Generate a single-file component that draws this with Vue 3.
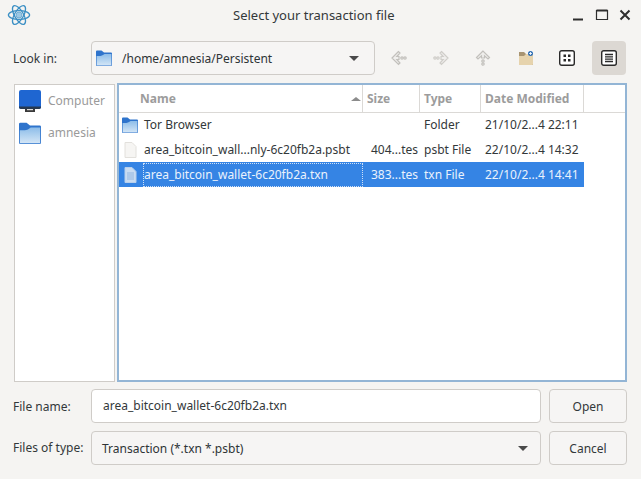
<template>
  <main class="dialog">
    <header class="titlebar">
      <svg class="logo" width="24" height="24" viewBox="0 0 24 24" fill="none" stroke="#3b8fc4" stroke-width="1.3">
        <ellipse cx="12" cy="12" rx="10.6" ry="4.4" />
        <ellipse cx="12" cy="12" rx="10.6" ry="4.4" transform="rotate(60 12 12)" />
        <ellipse cx="12" cy="12" rx="10.6" ry="4.4" transform="rotate(120 12 12)" />
        <circle cx="12" cy="12" r="3" fill="#9cc8e4" stroke="#5fa5d0" stroke-width="0.8" />
      </svg>
      <h1 class="title">Select your transaction file</h1>
      <div class="wincontrols">
        <svg width="14" height="14" viewBox="0 0 14 14"><path d="M1 11.5h10" stroke="#2e2e2e" stroke-width="2" /></svg>
        <svg width="14" height="14" viewBox="0 0 14 14" fill="none"><path d="M1.500 2.500h11v9h-11z" stroke="#2e2e2e" stroke-width="1.200" /><path d="M1.500 2.500h11" stroke="#2e2e2e" stroke-width="2" /></svg>
        <svg width="14" height="14" viewBox="0 0 14 14"><path d="M2.500 2.500l9 9M11.500 2.500l-9 9" stroke="#2e2e2e" stroke-width="2" /></svg>
      </div>
    </header>

    <section class="toolbar">
      <label class="label">Look in:</label>
      <div class="combo path">
        <svg class="ico" width="16" height="16" viewBox="0 0 16 16">
          <defs><linearGradient id="fold" x1="0" y1="0" x2="0" y2="1"><stop offset="0" stop-color="#8dbde9" /><stop offset="1" stop-color="#d4e6f6" /></linearGradient></defs>
          <path d="M0 1.500a1 1 0 0 1 1-1h4.500L8 2.500h7a1 1 0 0 1 1 1V15a1 1 0 0 1-1 1H1a1 1 0 0 1-1-1z" fill="#2f74cc" />
          <path d="M.6 6c2.500 0 5.400 0 6.400-1l1.500-1h6.900v11a.5.500 0 0 1-.5.500H1.100a.5.500 0 0 1-.5-.5z" fill="url(#fold)" />
        </svg>
        <span>/home/amnesia/Persistent</span>
        <i class="caret"></i>
      </div>
      <div class="tools">
        <button class="tool">
          <svg width="18" height="18" viewBox="0 0 18 18" fill="#f0efed" stroke="#c2c0bc" stroke-width="1.200"><path d="M8.500 2.500L2 9l6.500 6.500 1.500-1.500L6.800 10.500h2.200V7.500H6.800L10 4z" /><circle cx="12" cy="9" r="1.200" /><circle cx="15" cy="9" r="1.200" /></svg>
        </button>
        <button class="tool">
          <svg width="18" height="18" viewBox="0 0 18 18" fill="#f0efed" stroke="#cfcdc9" stroke-width="1.200"><path d="M9.500 2.500L16 9l-6.500 6.500L8 14l3.200-3.500H9V7.500h2.200L8 4z" /><circle cx="6" cy="9" r="1.200" /><circle cx="3" cy="9" r="1.200" /></svg>
        </button>
        <button class="tool">
          <svg width="18" height="18" viewBox="0 0 18 18" fill="#f0efed" stroke="#c2c0bc" stroke-width="1.200"><path d="M9 2L2.500 8.500 4 10l3.500-3.200V9h3V6.800L14 10l1.500-1.500z" /><circle cx="9" cy="12" r="1.200" /><circle cx="9" cy="15" r="1.200" /></svg>
        </button>
        <button class="tool">
          <svg class="newdir" width="16" height="16" viewBox="0 0 16 16"><path d="M1 2h5l2 2h6a1 1 0 0 1 1 1v9a1 1 0 0 1-1 1H1z" fill="#a89472" /><path d="M1 6h5l2-2h7v10a1 1 0 0 1-1 1H1z" fill="#e6d3ad" /><circle cx="12.500" cy="3.500" r="2.500" fill="#2f6fb5" /><path d="M11 3.500h3M12.500 2v3" stroke="#fff" stroke-width="0.800" /></svg>
        </button>
        <button class="tool">
          <svg width="16" height="16" viewBox="0 0 16 16"><rect x="0.700" y="0.700" width="14.600" height="14.600" rx="2" fill="#fff" stroke="#2a2a2a" stroke-width="1.400" /><path d="M4.500 4.500h2.500v2.500H4.500zM9 4.500h2.500v2.500H9zM4.500 9h2.500v2.500H4.500zM9 9h2.500v2.500H9z" fill="#2a2a2a" /></svg>
        </button>
        <button class="tool on">
          <svg width="16" height="16" viewBox="0 0 16 16"><rect x="0.700" y="0.700" width="14.600" height="14.600" rx="2" fill="#fff" stroke="#2a2a2a" stroke-width="1.400" /><path d="M4 4.500h8M4 6.800h8M4 9.200h8M4 11.500h8" stroke="#2a2a2a" stroke-width="1.300" /></svg>
        </button>
      </div>
    </section>

    <section class="browser">
      <aside class="side">
        <div class="place">
          <svg width="22" height="22" viewBox="0 0 22 22"><rect x="0" y="0" width="22" height="19" rx="2" fill="#1f66d1" /><path d="M0 16.500h22v.5a2 2 0 0 1-2 2H2a2 2 0 0 1-2-2z" fill="#26384f" /><path d="M6 19h10v3H6z" fill="#3a3a3a" /><path d="M8 19h6v1.200H8z" fill="#ddd" /></svg>
          <span>Computer</span>
        </div>
        <div class="place">
          <svg width="22" height="22" viewBox="0 0 16 16">
            <path d="M0 1.500a1 1 0 0 1 1-1h4.500L8 2.500h7a1 1 0 0 1 1 1V15a1 1 0 0 1-1 1H1a1 1 0 0 1-1-1z" fill="#2f74cc" />
            <path d="M.6 6c2.500 0 5.400 0 6.400-1l1.500-1h6.900v11a.5.500 0 0 1-.5.500H1.100a.5.500 0 0 1-.5-.5z" fill="url(#fold)" />
          </svg>
          <span>amnesia</span>
        </div>
      </aside>

      <div class="list">
        <div class="head">
          <div class="hcell name">Name<i class="sort"></i></div>
          <div class="hcell size">Size</div>
          <div class="hcell type">Type</div>
          <div class="hcell date">Date Modified</div>
          <div class="hrest"></div>
        </div>
        <div v-for="f in files" :key="f.name" class="row" :class="{ sel: f.sel }">
          <div class="cell name">
            <svg v-if="f.folder" width="16" height="16" viewBox="0 0 16 16">
              <path d="M0 1.500a1 1 0 0 1 1-1h4.500L8 2.500h7a1 1 0 0 1 1 1V15a1 1 0 0 1-1 1H1a1 1 0 0 1-1-1z" fill="#2f74cc" />
              <path d="M.6 6c2.500 0 5.400 0 6.400-1l1.500-1h6.900v11a.5.500 0 0 1-.5.500H1.100a.5.500 0 0 1-.5-.5z" fill="url(#fold)" />
            </svg>
            <svg v-else width="16" height="16" viewBox="0 0 16 16">
              <path d="M3 .5h7l4 4V15.500H3z" :fill="f.sel ? '#c9dcf2' : '#f6f5f3'" :stroke="f.sel ? '#b7cfec' : '#e2e0dc'" />
              <path v-if="f.sel" d="M5 6h7M5 8h7M5 10h7M5 12h7" stroke="#93b6e0" />
            </svg>
            <span class="fname" :class="{ focus: f.sel }">{{ f.name }}</span>
          </div>
          <div class="cell size">{{ f.size }}</div>
          <div class="cell type">{{ f.type }}</div>
          <div class="cell date">{{ f.date }}</div>
        </div>
      </div>
    </section>

    <section class="form">
      <label class="label">File name:</label>
      <div class="input">area_bitcoin_wallet-6c20fb2a.txn</div>
      <button class="btn">Open</button>
      <label class="label up">Files of type:</label>
      <div class="combo types"><span>Transaction (*.txn *.psbt)</span><i class="caret"></i></div>
      <button class="btn">Cancel</button>
    </section>
  </main>
</template>

<script setup>
const files = [
  { name: 'Tor Browser', size: '', type: 'Folder', date: '21/10/2...4 22:11', folder: true },
  { name: 'area_bitcoin_wall...nly-6c20fb2a.psbt', size: '404...tes', type: 'psbt File', date: '22/10/2...4 14:32' },
  { name: 'area_bitcoin_wallet-6c20fb2a.txn', size: '383...tes', type: 'txn File', date: '22/10/2...4 14:41', sel: true }
]
</script>

<style>
html, body { margin: 0; background: #f5f4f2; }
</style>

<style scoped>
.dialog {
  width: 641px;
  height: 479px;
  box-sizing: border-box;
  padding: 0 14px 0 14px;
  background: #f5f4f2;
  color: #2e3436;
  font-family: "Noto Sans", sans-serif;
  font-size: 12px;
  display: flex;
  flex-direction: column;
  overflow: hidden;
}
.titlebar {
  height: 30px;
  display: flex;
  align-items: center;
  position: relative;
}
.logo { margin-left: -7px; }
.title {
  position: absolute;
  left: 219px;
  top: 6px;
  margin: 0;
  font-size: 13px;
  font-weight: 400;
  line-height: 18px;
  color: #33383a;
}
.wincontrols {
  margin-left: auto;
  margin-right: -5px;
  display: flex;
  gap: 9px;
}
.toolbar {
  margin-top: 11px;
  height: 34px;
  display: flex;
  align-items: center;
}
.label { width: 77px; flex: none; color: #33383a; margin-left: -1px; margin-right: 1px; }
.combo {
  box-sizing: border-box;
  height: 34px;
  border: 1px solid #cfccc8;
  border-radius: 4px;
  background: #f6f5f4;
  display: flex;
  align-items: center;
}
.path { width: 284px; padding: 0 15px 0 4px; }
.ico { margin-right: 10px; }
.caret {
  margin-left: auto;
  width: 0;
  height: 0;
  border-left: 5px solid transparent;
  border-right: 5px solid transparent;
  border-top: 5px solid #4a4a4a;
}
.tools { margin-left: 7px; display: flex; gap: 8px; }
.tool {
  width: 34px;
  height: 34px;
  padding: 0;
  border: 0;
  border-radius: 4px;
  background: transparent;
  display: flex;
  align-items: center;
  justify-content: center;
}
.tool.on { background: #dcd8d3; }
.newdir { margin-left: 2px; }
.browser {
  margin-top: 8px;
  height: 299px;
  display: flex;
  gap: 2px;
}
.side {
  width: 101px;
  box-sizing: border-box;
  margin-top: 1px;
  border: 1px solid #cfccc8;
  background: #fff;
  padding: 5px 4px;
  color: #9a9a9a;
}
.place { height: 32px; display: flex; align-items: flex-start; gap: 7px; line-height: 22px; }
.list {
  width: 510px;
  box-sizing: border-box;
  border: 2px solid #93b5d5;
  background: #fff;
}
.head { height: 27.600px; display: flex; box-sizing: border-box; border-bottom: 1px solid #dbd9d6; }
.hcell {
  box-sizing: border-box;
  border-right: 1px solid #dbd9d6;
  font-weight: 700;
  color: #9c9c9c;
  line-height: 27px;
  padding-left: 4px;
  position: relative;
}
.hrest { flex: 1; }
.name { width: 244px; }
.size { width: 57px; }
.type { width: 61px; }
.date { width: 103px; }
.hcell.name { padding-left: 21px; }
.sort {
  position: absolute;
  right: 1px;
  top: 12px;
  border-left: 5px solid transparent;
  border-right: 5px solid transparent;
  border-bottom: 4px solid #8c8c8c;
}
.row {
  width: 465px;
  height: 24.800px;
  display: flex;
  align-items: center;
  color: #33383a;
}
.row.sel { background: #3584e4; color: #eaf2fc; }
.cell { box-sizing: border-box; padding-left: 8px; white-space: nowrap; overflow: hidden; }
.cell.type { padding-left: 4px; }
.cell.date { padding-left: 4px; }
.cell.name { display: flex; align-items: center; gap: 5px; padding-left: 3px; }
.fname { line-height: 24px; padding-left: 1px; }
.fname.focus { flex: 1; outline: 1px dotted #cfe0f6; outline-offset: -1px; }
.form {
  margin-top: 7px;
  display: grid;
  grid-template-columns: 77px 450px 86px;
  grid-template-rows: 34px 34px;
  column-gap: 0;
  row-gap: 8px;
  align-items: center;
}
.btn {
  justify-self: end;
  width: 78px;
  height: 34px;
  box-sizing: border-box;
  border: 1px solid #cfccc8;
  border-radius: 4px;
  background: #f6f5f4;
  font: inherit;
  color: #33383a;
  padding: 0;
}
.input {
  box-sizing: border-box;
  height: 34px;
  width: 450px;
  border: 1px solid #cfccc8;
  border-radius: 4px;
  background: #fff;
  padding-left: 11px;
  line-height: 32px;
  color: #33383a;
}
.types { width: 450px; padding: 0 12px 0 10px; }
.up { margin-top: -2px; }
</style>
